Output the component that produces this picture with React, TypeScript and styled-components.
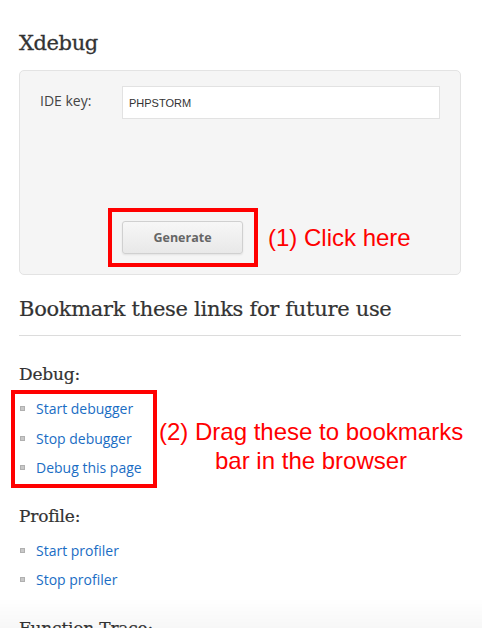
import React from "react";
import styled, { createGlobalStyle } from "styled-components";

const Global = createGlobalStyle`
  html, body { margin: 0; padding: 0; background: #fff; }
  body { font-family: "Open Sans", "Liberation Sans", sans-serif; color: #333; }
  * { box-sizing: border-box; }
`;

const Page = styled.div`
  padding: 0 21px 40px 19px;
  width: 482px;
`;

const Title = styled.h1`
  margin: 29px 0 0 0;
  font-family: "DejaVu Serif", serif;
  font-weight: normal;
  font-size: 21px;
  line-height: 28px;
  color: #333;
  letter-spacing: -0.4px;
  -webkit-text-stroke: 0.3px #333;
`;

const Panel = styled.form`
  margin-top: 13px;
  background: #f5f5f5;
  border: 1px solid #e3e3e3;
  border-radius: 5px;
  padding: 15px 20px 7px 20px;
  height: 205px;
  display: flex;
  flex-direction: column;
  justify-content: space-between;
`;

const FieldRow = styled.div`
  display: flex;
  align-items: flex-start;
`;

const Label = styled.label`
  width: 82px;
  font-size: 14px;
  line-height: 20px;
  padding-top: 5px;
  color: #444;
`;

const Input = styled.div`
  flex: 1;
  height: 33px;
  background: #fff;
  border: 1px solid #e2e2e2;
  padding: 0 6px;
  display: flex;
  align-items: center;
  font-family: "Liberation Sans", Arial, sans-serif;
  font-size: 11px;
  color: #333;
`;

const ActionRow = styled.div`
  display: flex;
  align-items: center;
  margin-left: 68px;
`;

const Highlight = styled.div<{ $on?: boolean }>`
  border: 4px solid ${(p) => (p.$on ? "#ff0000" : "transparent")};
`;

const ButtonBox = styled(Highlight)`
  padding: 9px 11px 9px 10px;
`;

const Button = styled.button`
  width: 121px;
  height: 33px;
  border: 1px solid #d0d0d0;
  border-radius: 3px;
  background: linear-gradient(#f7f7f7, #e8e8e8);
  box-shadow: 0 1px 2px rgba(0, 0, 0, 0.08);
  font-family: "Open Sans", sans-serif;
  font-weight: 700;
  font-size: 12.5px;
  color: #666;
  padding: 0;
`;

const Note = styled.div`
  font-family: "Liberation Sans", Arial, sans-serif;
  font-size: 24px;
  line-height: 29px;
  color: #ff0000;
  white-space: nowrap;
`;

const ClickNote = styled(Note)`
  margin-left: 10px;
`;

const DragNote = styled(Note)`
  margin: 27px 0 0 2px;
  text-align: center;
`;

const SectionTitle = styled.h2`
  margin: 20px 0 0 0;
  padding-bottom: 12px;
  border-bottom: 1px solid #dcdcdc;
  font-family: "DejaVu Serif", serif;
  font-weight: normal;
  font-size: 21px;
  line-height: 28px;
  color: #333;
  letter-spacing: -0.3px;
  -webkit-text-stroke: 0.2px #333;
`;

const GroupTitle = styled.h3<{ $first?: boolean }>`
  margin: ${(p) => (p.$first ? "26px" : "16px")} 0 4px 0;
  font-family: "DejaVu Serif", serif;
  font-weight: normal;
  font-size: 17px;
  line-height: 24px;
  color: #333;
  letter-spacing: -0.2px;
  -webkit-text-stroke: 0.2px #333;
`;

const GroupRow = styled.div`
  display: flex;
  align-items: flex-start;
`;

const ListBox = styled(Highlight)`
  flex: none;
  margin-left: -8px;
  width: 146px;
  padding: 0 4px 1px 5px;
`;

const List = styled.ul`
  list-style: none;
  margin: 0;
  padding: 0;
`;

const Item = styled.li`
  display: flex;
  align-items: center;
  height: 29.5px;
`;

const Bullet = styled.span`
  width: 5px;
  height: 5px;
  background: #c8c8c8;
  border: 1px solid #b0b0b0;
  margin-right: 11px;
  flex: none;
`;

const Link = styled.a`
  font-family: "Open Sans", sans-serif;
  font-size: 14px;
  color: #1a6dc4;
  text-decoration: none;
  white-space: nowrap;
`;

const Fade = styled.div`
  position: fixed;
  left: 0;
  right: 0;
  bottom: 0;
  height: 30px;
  background: linear-gradient(rgba(0, 0, 0, 0), rgba(0, 0, 0, 0.03));
  pointer-events: none;
`;

const LinkList = ({ items }: { items: string[] }) => (
  <List>
    {items.map((t) => (
      <Item key={t}>
        <Bullet />
        <Link href="#">{t}</Link>
      </Item>
    ))}
  </List>
);

export default function App() {
  return (
    <>
      <Global />
      <Page>
        <Title>Xdebug</Title>
        <Panel onSubmit={(e) => e.preventDefault()}>
          <FieldRow>
            <Label>IDE key:</Label>
            <Input>PHPSTORM</Input>
          </FieldRow>
          <ActionRow>
            <ButtonBox $on>
              <Button type="button">Generate</Button>
            </ButtonBox>
            <ClickNote>(1) Click here</ClickNote>
          </ActionRow>
        </Panel>

        <SectionTitle>Bookmark these links for future use</SectionTitle>

        <GroupTitle $first>Debug:</GroupTitle>
        <GroupRow>
          <ListBox $on>
            <LinkList items={["Start debugger", "Stop debugger", "Debug this page"]} />
          </ListBox>
          <DragNote>
            (2) Drag these to bookmarks
            <br />
            bar in the browser
          </DragNote>
        </GroupRow>

        <GroupTitle>Profile:</GroupTitle>
        <GroupRow>
          <ListBox>
            <LinkList items={["Start profiler", "Stop profiler"]} />
          </ListBox>
        </GroupRow>

        <GroupTitle>Function Trace:</GroupTitle>
      </Page>
      <Fade />
    </>
  );
}
